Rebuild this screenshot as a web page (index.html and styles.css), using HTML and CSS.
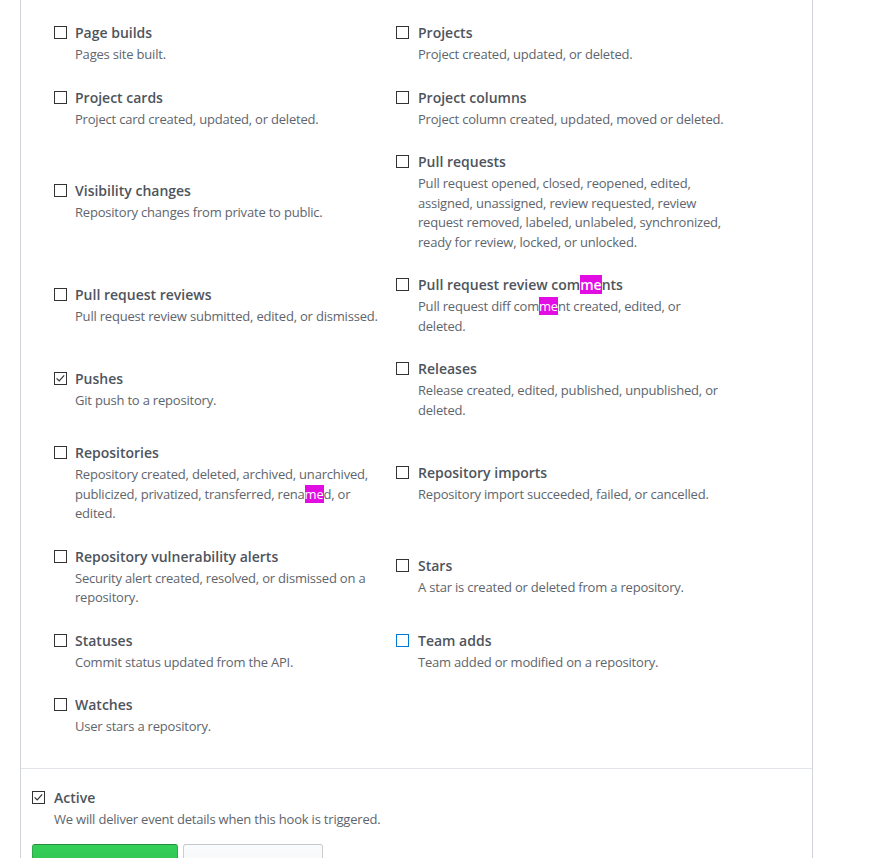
FILE: index.html
```html
<!DOCTYPE html>
<html lang="en">
<head>
<meta charset="utf-8">
<title>Webhook events</title>
<link rel="stylesheet" href="styles.css">
</head>
<body>
<div class="panel">
  <ul class="events">
    <li class="event"><span class="box"></span><div class="text"><div class="title">Page builds</div><div class="desc">Pages site built.</div></div></li>
    <li class="event"><span class="box"></span><div class="text"><div class="title">Projects</div><div class="desc">Project created, updated, or deleted.</div></div></li>

    <li class="event"><span class="box"></span><div class="text"><div class="title">Project cards</div><div class="desc">Project card created, updated, or deleted.</div></div></li>
    <li class="event"><span class="box"></span><div class="text"><div class="title">Project columns</div><div class="desc">Project column created, updated, moved or deleted.</div></div></li>

    <li class="event"><span class="box"></span><div class="text"><div class="title">Visibility changes</div><div class="desc">Repository changes from private to public.</div></div></li>
    <li class="event"><span class="box"></span><div class="text"><div class="title">Pull requests</div><div class="desc">Pull request opened, closed, reopened, edited,<br>assigned, unassigned, review requested, review<br>request removed, labeled, unlabeled, synchronized,<br>ready for review, locked, or unlocked.</div></div></li>

    <li class="event"><span class="box"></span><div class="text"><div class="title">Pull request reviews</div><div class="desc">Pull request review submitted, edited, or dismissed.</div></div></li>
    <li class="event"><span class="box"></span><div class="text"><div class="title">Pull request review com<mark class="hl">me</mark>nts</div><div class="desc">Pull request diff com<mark class="hl">me</mark>nt created, edited, or<br>deleted.</div></div></li>

    <li class="event"><span class="box checked"><svg viewBox="0 0 13 13" width="13" height="13"><polyline points="2.6,6.4 5.2,9 10.2,3.4" fill="none" stroke="#333" stroke-width="1.2"/></svg></span><div class="text"><div class="title">Pushes</div><div class="desc">Git push to a repository.</div></div></li>
    <li class="event"><span class="box"></span><div class="text"><div class="title">Releases</div><div class="desc">Release created, edited, published, unpublished, or<br>deleted.</div></div></li>

    <li class="event"><span class="box"></span><div class="text"><div class="title">Repositories</div><div class="desc">Repository created, deleted, archived, unarchived,<br>publicized, privatized, transferred, rena<mark class="hl">me</mark>d, or<br>edited.</div></div></li>
    <li class="event"><span class="box"></span><div class="text"><div class="title">Repository imports</div><div class="desc">Repository import succeeded, failed, or cancelled.</div></div></li>

    <li class="event"><span class="box"></span><div class="text"><div class="title">Repository vulnerability alerts</div><div class="desc">Security alert created, resolved, or dismissed on a<br>repository.</div></div></li>
    <li class="event"><span class="box"></span><div class="text"><div class="title">Stars</div><div class="desc">A star is created or deleted from a repository.</div></div></li>

    <li class="event"><span class="box"></span><div class="text"><div class="title">Statuses</div><div class="desc">Commit status updated from the API.</div></div></li>
    <li class="event"><span class="box focus"></span><div class="text"><div class="title">Team adds</div><div class="desc">Team added or modified on a repository.</div></div></li>

    <li class="event"><span class="box"></span><div class="text"><div class="title">Watches</div><div class="desc">User stars a repository.</div></div></li>
  </ul>
  <div class="footer">
    <div class="event">
      <span class="box checked"><svg viewBox="0 0 13 13" width="13" height="13"><polyline points="2.6,6.4 5.2,9 10.2,3.4" fill="none" stroke="#333" stroke-width="1.2"/></svg></span>
      <div class="text"><div class="title">Active</div><div class="desc">We will deliver event details when this hook is triggered.</div></div>
    </div>
    <div class="actions">
      <button class="btn btn-primary" type="button">Update webhook</button>
      <button class="btn" type="button">Delete webhook</button>
    </div>
  </div>
</div>
</body>
</html>
```
FILE: styles.css
```css
html, body {
  margin: 0;
  padding: 0;
  background: #ffffff;
}
body {
  font-family: "Open Sans", "Noto Sans", "Liberation Sans", sans-serif;
  color: #586069;
  overflow: hidden;
}
.panel {
  margin-left: 20px;
  width: 793px;
  box-sizing: border-box;
  border-left: 1px solid #d1d5da;
  border-right: 1px solid #d1d5da;
  min-height: 900px;
}
.events {
  list-style: none;
  margin: 0;
  padding: 22px 0 31px 33px;
  display: grid;
  grid-template-columns: 342px 342px;
  row-gap: 22px;
  align-items: center;
}
.event {
  display: flex;
  align-items: flex-start;
}
.events .event:nth-child(even) .box {
  margin-right: 9px;
}
.box {
  flex: none;
  width: 13px;
  height: 13px;
  box-sizing: border-box;
  border: 1px solid #333333;
  background: #fff;
  margin-top: 4px;
  margin-right: 8px;
  position: relative;
}
.box svg {
  position: absolute;
  left: -1px;
  top: -1px;
  display: block;
}
.box.focus {
  border-color: #0078d7;
}
.title {
  font-size: 14px;
  font-weight: 600;
  line-height: 21px;
  color: #4e545c;
  white-space: nowrap;
}
.desc {
  margin-top: 2px;
  font-size: 13px;
  line-height: 19.5px;
  letter-spacing: -0.2px;
  color: #5e656d;
  white-space: nowrap;
}
.hl {
  background: #e20de2;
  color: #ffffff;
}
.footer {
  border-top: 1px solid #e1e4e8;
  padding: 18px 0 0 11px;
}
.footer .box {
  margin-right: 9px;
}
.actions {
  display: flex;
  gap: 5px;
  margin-top: 15px;
}
.btn {
  font-family: inherit;
  font-size: 14px;
  font-weight: 600;
  line-height: 20px;
  padding: 26px 16px 8px;
  width: 140px;
  border: 1px solid rgba(27, 31, 35, 0.2);
  border-radius: 3px;
  background: linear-gradient(180deg, #fafbfc, #eff3f6 90%);
  color: #24292e;
}
.btn-primary {
  width: 146px;
  background: linear-gradient(180deg, #34d058, #28a745 90%);
  border-color: rgba(27, 31, 35, 0.2);
  color: #ffffff;
}
```
